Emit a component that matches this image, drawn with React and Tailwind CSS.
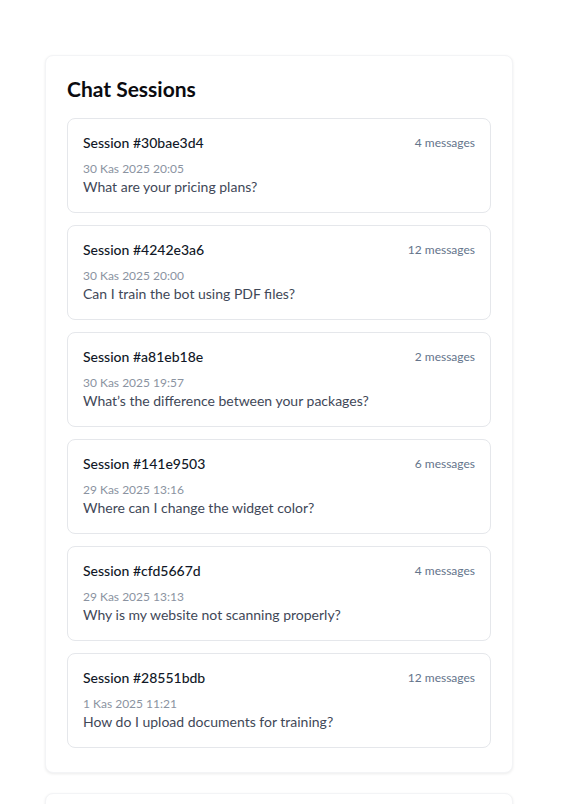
import React from "react";

const sessions = [
  { id: "30bae3d4", count: 4, date: "30 Kas 2025 20:05", question: "What are your pricing plans?" },
  { id: "4242e3a6", count: 12, date: "30 Kas 2025 20:00", question: "Can I train the bot using PDF files?" },
  { id: "a81eb18e", count: 2, date: "30 Kas 2025 19:57", question: "What’s the difference between your packages?" },
  { id: "141e9503", count: 6, date: "29 Kas 2025 13:16", question: "Where can I change the widget color?" },
  { id: "cfd5667d", count: 4, date: "29 Kas 2025 13:13", question: "Why is my website not scanning properly?" },
  { id: "28551bdb", count: 12, date: "1 Kas 2025 11:21", question: "How do I upload documents for training?" },
];

function SessionItem({ session }) {
  return (
    <div className="rounded-lg border border-[#e5e7eb] bg-white px-[15px] pt-[14px] pb-[15px]">
      <div className="flex items-start justify-between">
        <p className="text-[14px] leading-5 font-medium text-[#111827]">
          Session #{session.id}
        </p>
        <span className="text-[12px] leading-5 text-[#64748b]">
          {session.count} messages
        </span>
      </div>
      <p className="mt-2 text-[12px] leading-4 text-[#8b93a1]">{session.date}</p>
      <p className="text-[14px] leading-5 text-[#3f4858]">{session.question}</p>
    </div>
  );
}

export default function App() {
  return (
    <div
      className="min-h-screen bg-white pt-[55px]"
      style={{ fontFamily: "Lato, 'Noto Sans', sans-serif" }}
    >
      <div className="ml-[45px] w-[468px]">
        {/* ===== Chat sessions card ===== */}
        <div className="rounded-lg border border-[#f3f4f6] bg-white px-[21px] pt-[21px] pb-6 shadow-[0_1px_3px_rgba(0,0,0,0.08)]">
          <h2 className="mb-[17px] text-[21px] leading-6 font-bold text-[#0b0b0f]">
            Chat Sessions
          </h2>
          <div className="flex flex-col gap-3">
            {sessions.map((s) => (
              <SessionItem key={s.id} session={s} />
            ))}
          </div>
        </div>

        {/* next card, cut off */}
        <div className="mt-5 h-20 rounded-lg border border-[#f3f4f6] bg-white shadow-[0_1px_3px_rgba(0,0,0,0.08)]" />
      </div>
    </div>
  );
}
